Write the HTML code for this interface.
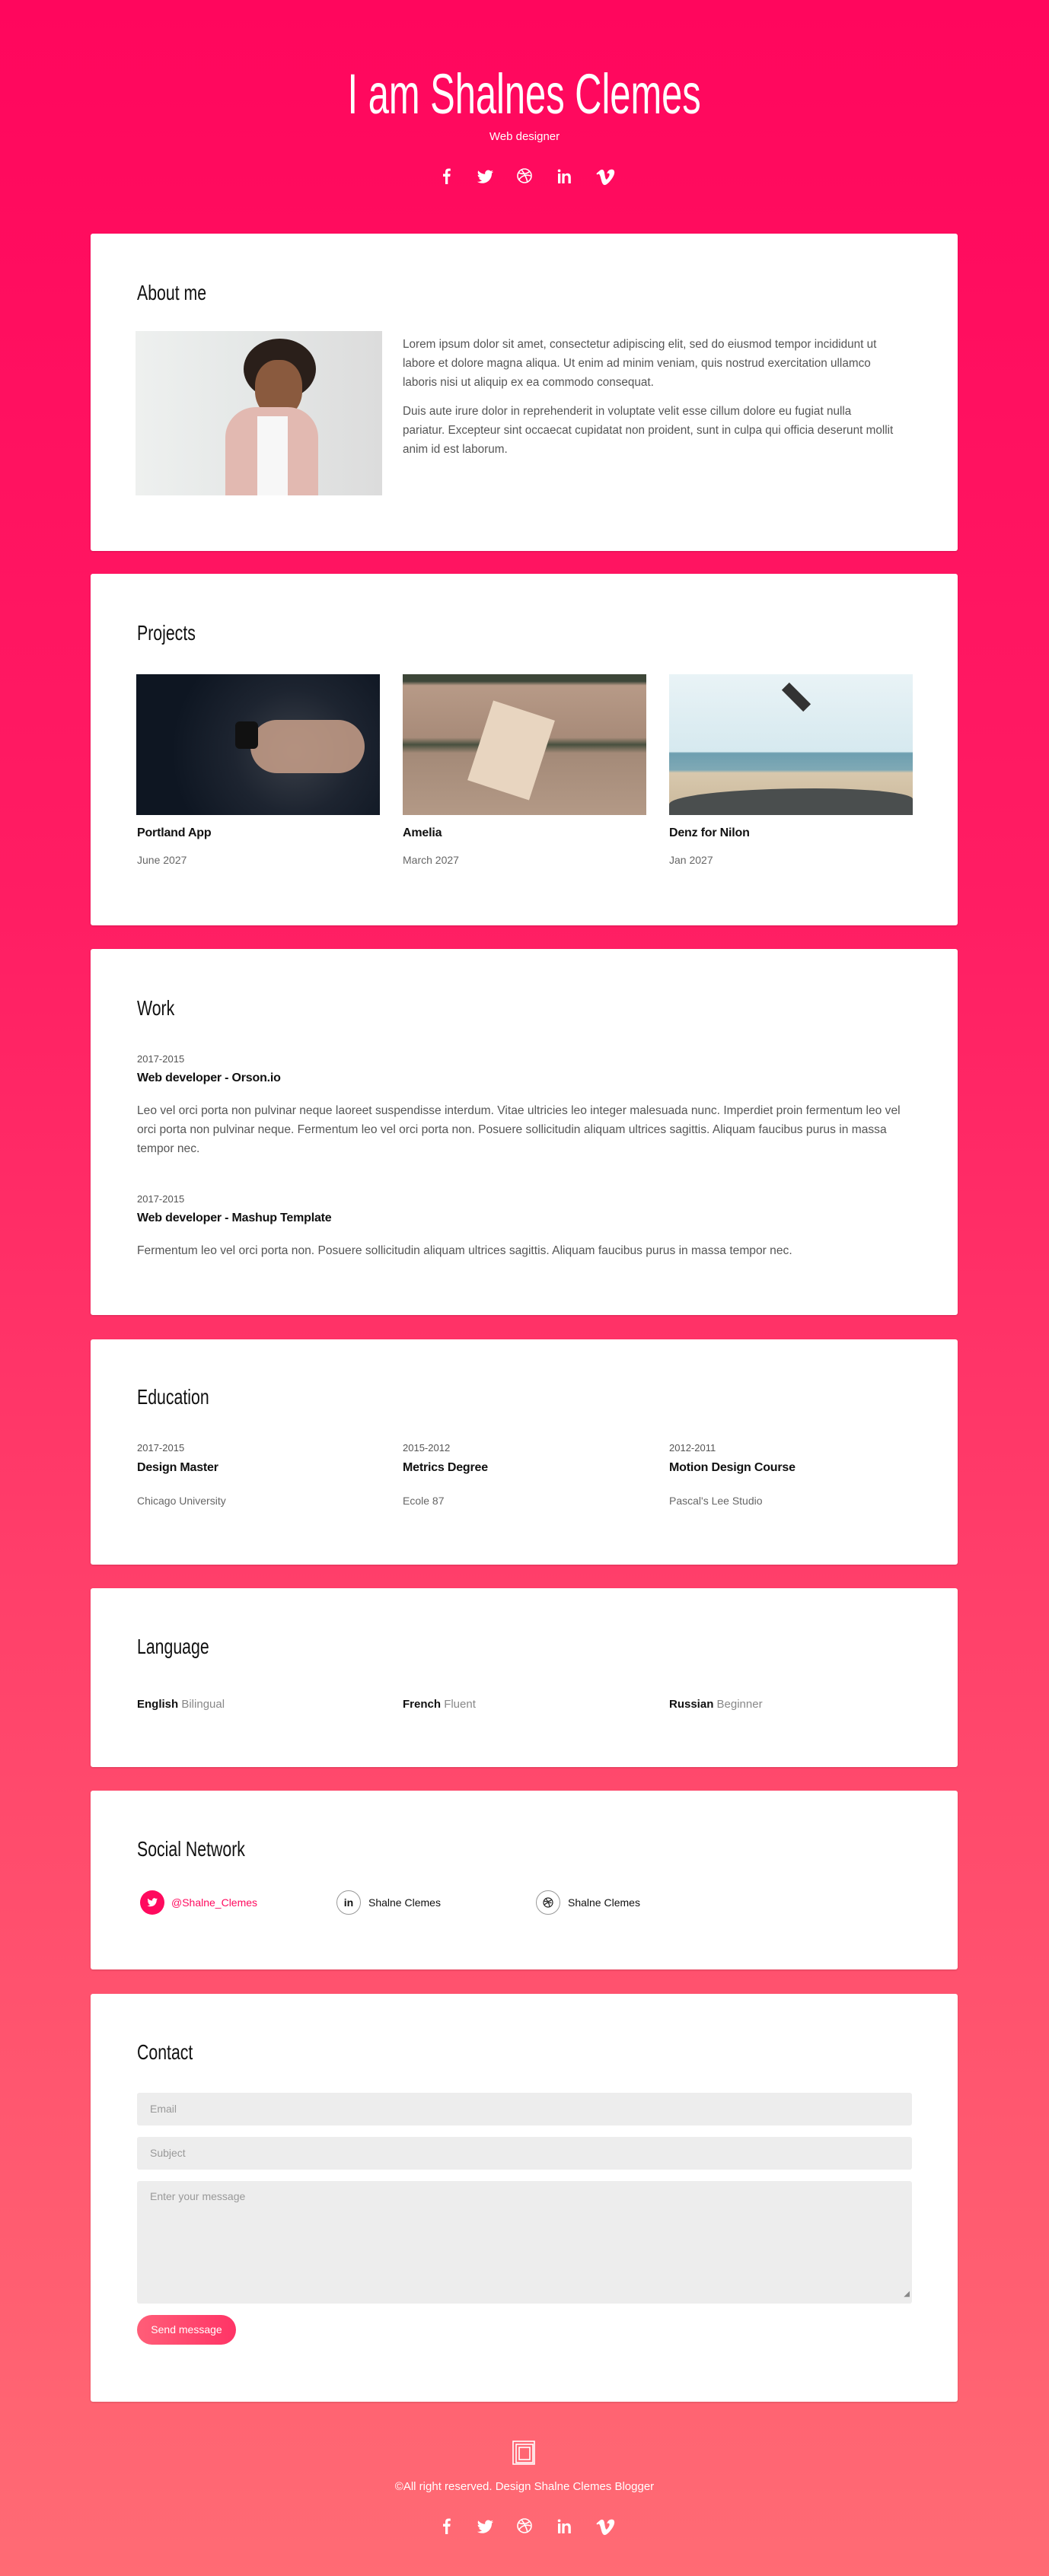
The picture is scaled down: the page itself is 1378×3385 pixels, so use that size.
<!DOCTYPE html>
<html><head><meta charset="utf-8">
<style>
*{margin:0;padding:0;box-sizing:border-box}
html,body{width:1378px;height:3385px;overflow:hidden}
body{position:relative;font-family:"Liberation Sans",sans-serif;background:linear-gradient(180deg,#ff065d 0%,#ff1d63 35%,#ff4a6c 70%,#ff6b74 100%);color:#222}
.a{position:absolute;white-space:nowrap}
.card{position:absolute;left:119px;width:1139px;background:#fff;border-radius:3px;box-shadow:0 1px 2px rgba(0,0,0,.15)}
.h{position:absolute;left:61px;font-size:28px;line-height:34px;color:#111;white-space:nowrap;transform:scaleX(.76);transform-origin:0 0}
.p{font-size:15.3px;line-height:25px;color:#555}
.t{font-size:16px;font-weight:bold;color:#111;line-height:20px;letter-spacing:-.2px}
.d{font-size:13px;color:#555;line-height:16px}
.s{font-size:14px;color:#666;line-height:18px}
.inp{position:absolute;left:61px;width:1018px;background:#ededed;border-radius:3px;font-size:14px;color:#999;padding-left:17px}
</style></head><body>

<div class="a" style="left:0;width:1378px;top:82px;text-align:center;line-height:84px;height:84px">
<span style="display:inline-block;font-size:74px;color:#fff;transform:scaleX(.66);">I am Shalnes Clemes</span></div>
<div class="a" style="left:0;width:1378px;top:170px;text-align:center;font-size:15px;color:#fff;line-height:20px">Web designer</div>

<svg class="a" style="left:570px;top:216px" width="250" height="30" viewBox="0 0 250 30" fill="#fff">
<path d="M15 26v-10h-3v-3.5h3v-2.5c0-3 1.6-4.5 4.3-4.5 1.2 0 2.2.1 2.5.1v3h-1.8c-1.4 0-1.7.7-1.7 1.7v2.2h3.4l-.5 3.5h-2.9v10z"/>
<path d="M78 9.5c-.8.4-1.6.6-2.5.7.9-.6 1.6-1.4 1.9-2.4-.8.5-1.8.9-2.8 1.1-1.6-1.7-4.4-1.8-6.1-.2-1.1 1-1.6 2.6-1.2 4.1-3.5-.2-6.8-1.8-9-4.6-1.2 2-.6 4.6 1.3 5.9-.7 0-1.4-.2-2-.5 0 2.1 1.5 3.9 3.5 4.3-.6.2-1.3.2-1.9.1.6 1.8 2.2 3 4.1 3-1.8 1.4-4.2 2.1-6.5 1.8 2 1.3 4.3 2 6.7 2 8.1 0 12.5-6.7 12.5-12.5v-.6c.8-.6 1.5-1.3 2-2.2z"/>
<g fill="none" stroke="#fff" stroke-width="1.6"><circle cx="119" cy="15" r="9"/><path d="M111 11c5 2 11 2 15-2M112 20c3-5 9-7 15-5M115 7c4 5 7 11 8 17"/></g>
<path d="M163 12h3.3v13h-3.3zM164.6 6.5a1.9 1.9 0 1 1 0 3.8 1.9 1.9 0 0 1 0-3.8zM168.5 12h3.2v1.8c.5-.9 1.7-2.1 3.6-2.1 3.8 0 4.5 2.5 4.5 5.7v7.6h-3.3v-6.8c0-1.6 0-3.7-2.3-3.7s-2.6 1.8-2.6 3.6v6.900h-3.300z"/>
<path transform="translate(12,0)" d="M225 11.5c-.1 2.3-1.7 5.4-4.8 9.4-3.2 4.2-5.9 6.2-8.1 6.2-1.4 0-2.5-1.3-3.5-3.8l-1.9-7c-.7-2.5-1.5-3.8-2.3-3.8-.2 0-.8.4-1.9 1.1l-1.1-1.5c1.2-1 2.3-2.1 3.5-3.1 1.6-1.4 2.8-2.1 3.5-2.1 1.9-.2 3 1.1 3.5 3.8.5 2.9.8 4.8 1 5.5.5 2.4 1.1 3.6 1.8 3.6.5 0 1.3-.8 2.3-2.4s1.6-2.8 1.6-3.7c.1-1.4-.4-2.1-1.6-2.1-.6 0-1.1.1-1.7.4 1.1-3.7 3.3-5.5 6.5-5.4 2.4.1 3.5 1.6 3.4 4.6z"/>
</svg>

<!-- About -->
<div class="card" style="top:307px;height:417px">
<div class="h" style="top:61px">About me</div>
<div class="a" style="left:59px;top:128px;width:324px;height:216px;background:linear-gradient(90deg,#eef0ef 0%,#e6e9e8 40%,#dcdcdc 100%)">
<div style="position:absolute;left:142px;top:10px;width:95px;height:80px;border-radius:50%;background:#2a1f1a"></div>
<div style="position:absolute;left:157px;top:38px;width:62px;height:75px;border-radius:45%;background:#8a5a3e"></div>
<div style="position:absolute;left:118px;top:100px;width:122px;height:116px;border-radius:40px 40px 0 0;background:#e2b9b1"></div>
<div style="position:absolute;left:160px;top:112px;width:40px;height:104px;background:#f7f7f7"></div>
</div>
<div class="a p" style="left:410px;top:133px">Lorem ipsum dolor sit amet, consectetur adipiscing elit, sed do eiusmod tempor incididunt ut<br>labore et dolore magna aliqua. Ut enim ad minim veniam, quis nostrud exercitation ullamco<br>laboris nisi ut aliquip ex ea commodo consequat.</div>
<div class="a p" style="left:410px;top:221px">Duis aute irure dolor in reprehenderit in voluptate velit esse cillum dolore eu fugiat nulla<br>pariatur. Excepteur sint occaecat cupidatat non proident, sunt in culpa qui officia deserunt mollit<br>anim id est laborum.</div>
</div>

<!-- Projects -->
<div class="card" style="top:754px;height:462px">
<div class="h" style="top:61px">Projects</div>
<div class="a" style="left:60px;top:132px;width:320px;height:185px;background:radial-gradient(circle at 65% 55%,#3a3f48 0,#1d2430 35%,#0e1622 70%),#111"><div style="position:absolute;left:150px;top:60px;width:150px;height:70px;border-radius:40px;background:#c9a08a;opacity:.85"></div><div style="position:absolute;left:130px;top:62px;width:30px;height:36px;border-radius:6px;background:#111"></div></div>
<div class="a" style="left:410px;top:132px;width:320px;height:185px;background:linear-gradient(180deg,#3d4638 0,#3d4638 5%,#b79a87 8%,#a88b79 45%,#48503f 50%,#a48a78 56%,#b39986 100%)"><div style="position:absolute;left:100px;top:45px;width:85px;height:110px;background:#e8d5c0;transform:rotate(18deg)"></div></div>
<div class="a" style="left:760px;top:132px;width:320px;height:185px;background:linear-gradient(180deg,#e9f3f6 0,#d6e9ef 55%,#6e9fb0 56%,#7fa9b5 68%,#d8c8ad 70%,#c9b79a 100%)"><div style="position:absolute;left:140px;top:0;width:60px;height:60px;"><div style="width:14px;height:40px;background:#333;transform:rotate(-45deg);margin:10px 20px"></div></div><div style="position:absolute;left:0;top:150px;width:320px;height:35px;background:#4a4e4e;border-radius:60% 40% 0 0"></div></div>
<div class="a t" style="left:61px;top:331px">Portland App</div>
<div class="a t" style="left:410px;top:331px">Amelia</div>
<div class="a t" style="left:760px;top:331px">Denz for Nilon</div>
<div class="a s" style="left:61px;top:367px">June 2027</div>
<div class="a s" style="left:410px;top:367px">March 2027</div>
<div class="a s" style="left:760px;top:367px">Jan 2027</div>
</div>

<!-- Work -->
<div class="card" style="top:1247px;height:481px">
<div class="h" style="top:61px">Work</div>
<div class="a d" style="left:61px;top:137px">2017-2015</div>
<div class="a t" style="left:61px;top:160px">Web developer - Orson.io</div>
<div class="a p" style="left:61px;top:200px;font-size:15.6px">Leo vel orci porta non pulvinar neque laoreet suspendisse interdum. Vitae ultricies leo integer malesuada nunc. Imperdiet proin fermentum leo vel<br>orci porta non pulvinar neque. Fermentum leo vel orci porta non. Posuere sollicitudin aliquam ultrices sagittis. Aliquam faucibus purus in massa<br>tempor nec.</div>
<div class="a d" style="left:61px;top:321px">2017-2015</div>
<div class="a t" style="left:61px;top:344px">Web developer - Mashup Template</div>
<div class="a p" style="left:61px;top:384px;font-size:15.6px">Fermentum leo vel orci porta non. Posuere sollicitudin aliquam ultrices sagittis. Aliquam faucibus purus in massa tempor nec.</div>
</div>

<!-- Education -->
<div class="card" style="top:1760px;height:296px">
<div class="h" style="top:59px">Education</div>
<div class="a d" style="left:61px;top:135px">2017-2015</div>
<div class="a d" style="left:410px;top:135px">2015-2012</div>
<div class="a d" style="left:760px;top:135px">2012-2011</div>
<div class="a t" style="left:61px;top:159px">Design Master</div>
<div class="a t" style="left:410px;top:159px">Metrics Degree</div>
<div class="a t" style="left:760px;top:159px">Motion Design Course</div>
<div class="a s" style="left:61px;top:203px">Chicago University</div>
<div class="a s" style="left:410px;top:203px">Ecole 87</div>
<div class="a s" style="left:760px;top:203px">Pascal's Lee Studio</div>
</div>

<!-- Language -->
<div class="card" style="top:2087px;height:235px">
<div class="h" style="top:60px">Language</div>
<div class="a" style="left:61px;top:143px;font-size:15px;line-height:20px"><b style="color:#111">English</b> <span style="color:#888">Bilingual</span></div>
<div class="a" style="left:410px;top:143px;font-size:15px;line-height:20px"><b style="color:#111">French</b> <span style="color:#888">Fluent</span></div>
<div class="a" style="left:760px;top:143px;font-size:15px;line-height:20px"><b style="color:#111">Russian</b> <span style="color:#888">Beginner</span></div>
</div>

<!-- Social -->
<div class="card" style="top:2353px;height:235px">
<div class="h" style="top:60px">Social Network</div>
<div class="a" style="left:65px;top:131px;width:32px;height:32px;border-radius:50%;background:#ff0a5e"><svg width="32" height="32" viewBox="0 0 32 32" fill="#fff"><path d="M23 11.5c-.5.2-1 .4-1.6.4.6-.4 1-.9 1.2-1.5-.5.3-1.1.6-1.8.7-1-1.1-2.8-1.1-3.9-.1-.7.6-1 1.6-.8 2.6-2.2-.1-4.3-1.1-5.7-2.9-.8 1.3-.4 2.9.8 3.8-.4 0-.9-.1-1.3-.3 0 1.3.9 2.5 2.2 2.7-.4.1-.8.1-1.2.1.4 1.1 1.4 1.9 2.6 1.9-1.1.9-2.7 1.3-4.1 1.1 1.3.8 2.7 1.3 4.3 1.3 5.2 0 8-4.3 8-8v-.4c.5-.4.9-.8 1.3-1.4z"/></svg></div>
<div class="a" style="left:106px;top:138px;font-size:14px;color:#ff0a5e;line-height:18px">@Shalne_Clemes</div>
<div class="a" style="left:323px;top:131px;width:32px;height:32px;border-radius:50%;border:1px solid #999;text-align:center;font-weight:bold;font-size:14px;line-height:30px;color:#111">in</div>
<div class="a" style="left:365px;top:138px;font-size:14px;color:#111;line-height:18px">Shalne Clemes</div>
<div class="a" style="left:585px;top:131px;width:32px;height:32px;border-radius:50%;border:1px solid #999"><svg width="30" height="30" viewBox="0 0 30 30" fill="none" stroke="#222" stroke-width="1.2"><circle cx="15" cy="15" r="6"/><path d="M9.5 13c3 1 7 1 10-1.5M10 18.5c2-3 5.5-4 9.5-3M12 10c2.5 3 4.5 7 5 10.5"/></svg></div>
<div class="a" style="left:627px;top:138px;font-size:14px;color:#111;line-height:18px">Shalne Clemes</div>
</div>

<!-- Contact -->
<div class="card" style="top:2620px;height:536px">
<div class="h" style="top:60px">Contact</div>
<div class="inp" style="top:130px;height:43px;line-height:43px">Email</div>
<div class="inp" style="top:188px;height:43px;line-height:43px">Subject</div>
<div class="inp" style="top:246px;height:161px;padding-top:10px;line-height:20px">Enter your message<span style="position:absolute;right:3px;bottom:2px;font-size:10px;color:#888">◢</span></div>
<div class="a" style="left:61px;top:422px;width:130px;height:39px;border-radius:20px;background:linear-gradient(90deg,#ff5e78,#ff3466);color:#fff;font-size:14px;line-height:39px;text-align:center">Send message</div>
</div>

<!-- Footer -->
<svg class="a" style="left:672px;top:3206px" width="34" height="34" viewBox="0 0 34 34" fill="none" stroke="#fff" stroke-width="1.6"><rect x="2" y="2" width="28" height="30"/><rect x="6" y="6" width="22" height="24"/><rect x="10" y="10" width="14" height="16"/></svg>
<div class="a" style="left:0;width:1378px;top:3258px;text-align:center;font-size:15px;color:#fff;line-height:20px">©All right reserved. Design Shalne Clemes Blogger</div>
<svg class="a" style="left:570px;top:3304px" width="250" height="30" viewBox="0 0 250 30" fill="#fff">
<path d="M15 26v-10h-3v-3.5h3v-2.5c0-3 1.6-4.5 4.3-4.5 1.2 0 2.2.1 2.5.1v3h-1.8c-1.4 0-1.7.7-1.7 1.7v2.2h3.4l-.5 3.5h-2.9v10z"/>
<path d="M78 9.5c-.8.4-1.6.6-2.5.7.9-.6 1.6-1.4 1.9-2.4-.8.5-1.8.9-2.8 1.1-1.6-1.7-4.4-1.8-6.1-.2-1.1 1-1.6 2.6-1.2 4.1-3.5-.2-6.8-1.8-9-4.6-1.2 2-.6 4.6 1.3 5.9-.7 0-1.4-.2-2-.5 0 2.1 1.5 3.9 3.5 4.3-.6.2-1.3.2-1.9.1.6 1.8 2.2 3 4.1 3-1.8 1.4-4.2 2.1-6.5 1.8 2 1.3 4.3 2 6.7 2 8.1 0 12.5-6.7 12.5-12.5v-.6c.8-.6 1.5-1.3 2-2.2z"/>
<g fill="none" stroke="#fff" stroke-width="1.6"><circle cx="119" cy="15" r="9"/><path d="M111 11c5 2 11 2 15-2M112 20c3-5 9-7 15-5M115 7c4 5 7 11 8 17"/></g>
<path d="M163 12h3.3v13h-3.3zM164.6 6.5a1.9 1.9 0 1 1 0 3.8 1.9 1.9 0 0 1 0-3.8zM168.5 12h3.2v1.8c.5-.9 1.7-2.1 3.6-2.1 3.8 0 4.5 2.5 4.5 5.7v7.6h-3.3v-6.8c0-1.6 0-3.7-2.3-3.7s-2.6 1.8-2.6 3.6v6.9h-3.3z"/>
<path transform="translate(12,0)" d="M225 11.5c-.1 2.3-1.7 5.4-4.8 9.4-3.2 4.2-5.9 6.2-8.1 6.2-1.4 0-2.5-1.3-3.5-3.8l-1.9-7c-.7-2.5-1.5-3.8-2.3-3.8-.2 0-.8.4-1.9 1.1l-1.1-1.5c1.2-1 2.3-2.1 3.5-3.1 1.6-1.4 2.8-2.1 3.5-2.1 1.9-.2 3 1.1 3.5 3.8.5 2.9.8 4.8 1 5.5.5 2.4 1.1 3.6 1.8 3.6.5 0 1.3-.8 2.3-2.4s1.6-2.8 1.6-3.7c.1-1.4-.4-2.1-1.6-2.1-.6 0-1.1.1-1.7.4 1.1-3.7 3.3-5.5 6.5-5.4 2.4.1 3.5 1.6 3.4 4.6z"/>
</svg>
</body></html>
